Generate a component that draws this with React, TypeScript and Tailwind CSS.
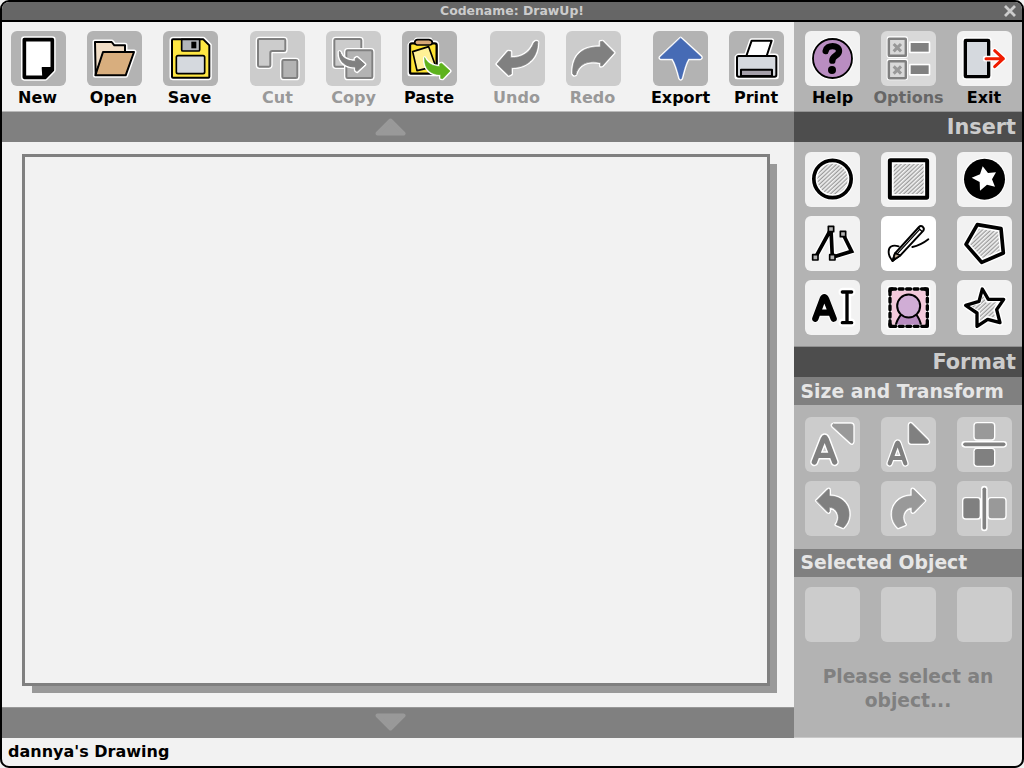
import React from "react";

type IconProps = { box: string; children?: React.ReactNode };

const G = "#808080";
const L = "#999999";

function Icon({ box, children }: IconProps) {
  return (
    <svg viewBox={box} className="block h-[55px] w-[55px]" fill="none" strokeLinejoin="round" strokeLinecap="round">
      {children}
    </svg>
  );
}

/* A shape with a white halo behind its outline. */
function Halo({ d, w = 6 }: { d: string; w?: number }) {
  return <path d={d} fill="#fff" stroke="#fff" strokeWidth={w + 9} />;
}

function Cut({ d, fill = G, w = 10 }: { d: string; fill?: string; w?: number }) {
  return (
    <>
      <path d={d} fill="#fff" stroke="#fff" strokeWidth={w} />
      <path d={d} fill={fill} stroke={fill} strokeWidth={Math.max(w - 8, 1)} />
    </>
  );
}

function Hatch() {
  return (
    <defs>
      <pattern id="hatch" width="8.8" height="8.8" patternUnits="userSpaceOnUse" patternTransform="rotate(-43)">
        <rect width="8.8" height="8.8" fill="#f4f4f4" />
        <rect y="2" width="8.8" height="3.8" fill="#999" />
      </pattern>
    </defs>
  );
}

const folderBack = "M284 126H334L342 136H374V156H312L286 222Z";
const folderFront = "M308 156H401L376 226H285Z";
const floppy = "M517 118H608L626 136V230Q626 233 623 233H517Q514 233 514 230V121Q514 118 517 118Z";
const cutA = "M58 57H132Q136 57 136 61V89Q136 93 132 93H97Q91 93 91 98V136Q91 140 87 140H58Q54 140 54 136V61Q54 57 58 57Z";
const cutB = "M131 120H168Q172 120 172 124V170Q172 174 168 174H131Q127 174 127 170V124Q127 120 131 120Z";
const copyA = "M287 57H360Q364 57 364 61V136Q364 140 360 140H287Q283 140 283 136V61Q283 57 287 57Z";
const copyB = "M323 91H393Q397 91 397 95V170Q397 174 393 174H323Q319 174 319 170V95Q319 91 323 91Z";
const copyArrow = "M300 96C306 114 320 123 346 124V116L351 113L374 133L351 154L347 151V141C316 141 296 125 298 96Z";
const pasteArrow = "M554 114C564 132 578 138 599 140V132L605 130L630 153L608 176L602 175V164C574 164 552 149 554 114Z";
const undo = "M173 66C174 105 151 143 94 143V162L86 166L51 132L84 94L92 95V113C124 115 151 98 162 68Q169 61 173 66Z";
const redo = "M287 164C296 132 323 120 362 128V138L367 137L402 98L368 64L361 65V81C308 79 277 105 278 161Q281 168 287 164Z";
const exportArrow = "M123 114L184 170Q187 174 182 176H146C137 191 132 211 126 235Q123 241 120 235C114 211 108 191 99 176H63Q59 174 62 171Z";

const NewIcon = () => (
  <Icon box="32 93 165 165">
    <Halo d="M72 119H156V210L134 232H72Z" w={11} />
    <path d="M72 119H156V210L134 232H72Z" fill="#fff" stroke="#000" strokeWidth="11" />
    <path d="M126 203H156L128 232Z" fill="#000" stroke="#000" strokeWidth="4" />
  </Icon>
);
const OpenIcon = () => (
  <Icon box="260 93 165 165">
    <Halo d={folderBack} /><Halo d={folderFront} />
    <path d={folderBack} fill="#f2dec6" stroke="#000" strokeWidth="6" />
    <path d={folderFront} fill="#d8ae7e" stroke="#000" strokeWidth="6" />
  </Icon>
);
const SaveIcon = () => (
  <Icon box="487 93 165 165">
    <Halo d={floppy} />
    <path d={floppy} fill="#ffe743" stroke="#000" strokeWidth="6" />
    <path d="M543 118H597V149Q597 153 593 153H547Q543 153 543 149Z" fill="#b2b5ba" stroke="#000" strokeWidth="5" />
    <rect x="572" y="125" width="15" height="20" fill="#000" />
    <rect x="527" y="167" width="85" height="54" rx="5" fill="#d5d9de" stroke="#000" strokeWidth="5" />
  </Icon>
);
const CutIcon = () => (
  <Icon box="30 33 165 165">
    <Halo d={cutA} w={5} /><Halo d={cutB} w={5} />
    <path d={cutA} fill="#ccc" stroke={G} strokeWidth="6" />
    <path d={cutB} fill="#b3b3b3" stroke={G} strokeWidth="6" />
  </Icon>
);
const CopyIcon = () => (
  <Icon box="258 33 165 165">
    <Halo d={copyA} w={5} />
    <path d={copyA} fill="#ccc" stroke={G} strokeWidth="6" />
    <Halo d={copyB} w={5} />
    <path d={copyB} fill="#b3b3b3" stroke={G} strokeWidth="6" />
    <Cut d={copyArrow} w={11} />
  </Icon>
);
const PasteIcon = () => (
  <Icon box="486 33 165 165">
    <Halo d="M515 69H584Q590 69 590 75V161H510V75Z" />
    <Halo d="M530 60H570L577 75H524Z" />
    <rect x="510" y="70" width="80" height="91" rx="6" fill="#fee332" stroke="#000" strokeWidth="7" />
    <path d="M518 95L566 80L587 139L531 152Z" fill="#fff196" stroke="#000" strokeWidth="5" />
    <path d="M533 59H567Q577 60 577 68Q576 75 569 75H531Q524 74 524 67Q525 60 533 59Z" fill="#d8a878" stroke="#000" strokeWidth="5" />
    <Cut d={pasteArrow} fill="#5db21c" />
  </Icon>
);
const UndoIcon = () => <Icon box="30 33 165 165"><Cut d={undo} /></Icon>;
const RedoIcon = () => <Icon box="258 33 165 165"><Cut d={redo} /></Icon>;
const ExportIcon = () => <Icon box="40 93 165 165"><Cut d={exportArrow} fill="#466bb5" w={9} /></Icon>;
const PrintIcon = () => (
  <Icon box="268 93 165 165">
    <Halo d="M336 122H396L381 168H320Z" />
    <Halo d="M296 168H406Q410 168 410 172V230H292V172Z" />
    <path d="M336 122H396L381 168H320Z" fill="#fff" stroke="#000" strokeWidth="6" />
    <rect x="292" y="168" width="118" height="62" rx="5" fill="#d5d9de" stroke="#000" strokeWidth="6" />
    <path d="M304 228V209H397V228Z" fill="#a5a0aa" stroke="#000" strokeWidth="6" />
  </Icon>
);
const HelpIcon = () => (
  <Icon box="45 93 165 165">
    <circle cx="127.500" cy="175.500" r="65" fill="#fff" />
    <circle cx="127.500" cy="175.500" r="58.500" fill="#b98dc1" stroke="#000" strokeWidth="5.500" />
    <path d="M107 153C110 133 147 134 147 153C147 168 127 166 127 182" stroke="#000" strokeWidth="19" />
    <circle cx="126" cy="210" r="12" fill="#000" />
  </Icon>
);
const OptionsIcon = () => (
  <Icon box="274 93 165 165">
    {[142, 209].map((y) => (
      <g key={y}>
        <rect x="291" y={y - 33} width="64" height="65" rx="7" fill="#fff" />
        <rect x="297.500" y={y - 25.500} width="51" height="51" rx="2" fill="#d9d9d9" stroke={G} strokeWidth="7.500" />
        <path d={`M312 ${y - 10}L334 ${y + 12}M334 ${y - 10}L312 ${y + 12}`} stroke={L} strokeWidth="9" strokeLinecap="butt" />
        <rect x="358" y={y - 18} width="64" height="36" rx="4" fill="#fff" />
        <rect x="363" y={y - 13} width="54" height="26" fill={G} />
      </g>
    ))}
  </Icon>
);
const ExitIcon = () => (
  <Icon box="502 93 165 165">
    <Halo d="M527 121H597V230H527Z" w={9} />
    <rect x="527" y="121" width="70" height="109" rx="2" fill="#d5d9de" stroke="#000" strokeWidth="10" />
    <path d="M588 176H641M614 152L641 176L614 200" stroke="#fff" strokeWidth="17" />
    <path d="M589 176H641M615 152L641 176L615 200" stroke="#f01c00" strokeWidth="9" />
  </Icon>
);
const CircleIcon = () => (
  <Icon box="30 21 165 165">
    <Hatch />
    <circle cx="112.500" cy="102" r="65" fill="#fff" />
    <circle cx="112.500" cy="102" r="56" fill="#fff" stroke="#000" strokeWidth="11" />
    <circle cx="112.500" cy="102" r="45.500" fill="url(#hatch)" />
  </Icon>
);
const SquareIcon = () => (
  <Icon box="258 21 165 165">
    <rect x="276" y="37" width="129" height="130" rx="9" fill="#fff" />
    <rect x="284.500" y="46" width="112" height="112" rx="2" fill="#fff" stroke="#000" strokeWidth="12" />
    <rect x="296" y="57" width="90" height="90" fill="url(#hatch)" />
  </Icon>
);
const BadgeIcon = () => (
  <Icon box="486 21 165 165">
    <circle cx="568.500" cy="102.500" r="65" fill="#fff" />
    <circle cx="568.500" cy="102.500" r="61.500" fill="#000" />
    <path d="M563 64L579 84L603 82L591 103L600 125L576 119L555 137L554 111L530 98L555 88Z" fill="#fff" />
  </Icon>
);
const PathIcon = () => (
  <Icon box="30 17 165 165">
    <path d="M61 142L108 56L112 141L170 123L144 71" stroke="#fff" strokeWidth="19" />
    <path d="M61 142L108 56L112 141L170 123L144 71" stroke="#000" strokeWidth="11" strokeLinejoin="miter" strokeMiterlimit="3" />
    {[[61, 141], [108, 56], [144, 71], [112, 141]].map(([x, y]) => (
      <rect key={x} x={x - 8} y={y - 8} width="16" height="16" fill="#b3b3b3" stroke="#000" strokeWidth="5" />
    ))}
  </Icon>
);
const PencilIcon = () => (
  <Icon box="258 17 165 165">
    <path d="M311 108C291 102 280 110 281 126C281 139 287 143 292 151M352 110C372 106 386 98 400 87" stroke="#000" strokeWidth="5.500" />
    <path d="M293 151L300 129L372 50Q377 45 383 49Q389 54 385 61L316 135Z" fill="#fff" stroke="#000" strokeWidth="6" />
    <path d="M300 129L316 135L293 151Z" fill="#b7a48f" stroke="#000" strokeWidth="5" />
    <path d="M293 151L299 144" stroke="#000" strokeWidth="7" />
    <path d="M308 129L374 57M370 53L382 64" stroke="#000" strokeWidth="4" />
  </Icon>
);
const pentagon = "M547 43L618 55L625 128L560 156L513 102Z";
const PentagonIcon = () => (
  <Icon box="486 17 165 165">
    <Halo d={pentagon} w={10} />
    <path d={pentagon} stroke="#000" strokeWidth="11" fill="#fff" />
    <path d="M552 55L609 64L614 121L563 143L525 101Z" fill="url(#hatch)" />
  </Icon>
);
const TextIcon = () => (
  <Icon box="30 209 165 165">
    <path d="M61 325L88 260L115 325M70 307H106M143 245H169M143 337H169M156 245V337" stroke="#fff" strokeWidth="25" />
    <path d="M61 325L83 266Q88 255 93 266L116 325M72 307H106" stroke="#000" strokeWidth="19" />
    <path d="M142 245H170M142 337H170M156 245V337" stroke="#000" strokeWidth="10" />
  </Icon>
);
const ImageIcon = () => (
  <Icon box="258 209 165 165">
    <rect x="275" y="226" width="131" height="131" rx="9" fill="#fff" />
    <rect x="285" y="236" width="112" height="112" fill="#f4cadb" />
    <path d="M302 347C304 330 312 320 321 309H361C370 320 377 330 378 347Z" fill="#b98dc1" stroke="#000" strokeWidth="6" />
    <circle cx="341" cy="287" r="34.500" fill="#d0add5" stroke="#000" strokeWidth="6" />
    <path d="M285 236H397V348H285Z" stroke="#fff" strokeWidth="9" strokeLinecap="butt" />
    <path d="M290 236H397V348H285V236Z" stroke="#000" strokeWidth="10" strokeDasharray="12 10.400" />
    <path d="M285 243V236H292M390 236H397V243M397 341V348H390M292 348H285V341" stroke="#000" strokeWidth="10" />
  </Icon>
);
const star = "M562 236L580 267L626 267L605 298L615 337L578 327L546 348L546 308L512 285L552 273Z";
const StarIcon = () => (
  <Icon box="486 209 165 165">
    <Halo d={star} w={10} />
    <path d={star} fill="#fff" stroke="#000" strokeWidth="10" />
    <path d="M563 254L574 277L606 276L594 299L601 323L577 316L555 331L555 303L529 288L558 280Z" fill="url(#hatch)" />
  </Icon>
);
const letterA = "M74 366L101 297Q105 288 109 297L135 366M84 346H126";
const letterB = "M300 370L321 312Q324 304 327 312L347 370M308 354H340";
const GrowIcon = () => (
  <Icon box="46 231 165 165">
    <path d={letterA} stroke="#fff" strokeWidth="25" /><path d={letterA} stroke={G} strokeWidth="16" />
    <Cut d="M132 252H184Q190 252 190 258V305Q189 313 183 308L129 259Q125 254 132 252Z" fill={L} />
  </Icon>
);
const ShrinkIcon = () => (
  <Icon box="274 231 165 165">
    <path d={letterB} stroke="#fff" strokeWidth="20" /><path d={letterB} stroke={G} strokeWidth="12.500" />
    <Cut d="M359 256Q359 249 365 251L414 300Q420 308 413 310H364Q359 310 359 304Z" />
  </Icon>
);
const FlipVIcon = () => (
  <Icon box="502 231 165 165">
    <rect x="551" y="246" width="66" height="56" rx="11" fill="#fff" />
    <rect x="551" y="323" width="66" height="58" rx="11" fill="#fff" />
    <rect x="555" y="250" width="58" height="48" rx="7" fill={L} />
    <rect x="555" y="327" width="58" height="50" rx="7" fill={G} />
    <path d="M525 313H642" stroke="#fff" strokeWidth="20" /><path d="M526 313H642" stroke={G} strokeWidth="11" />
  </Icon>
);
const rotate = "M81 76L114 43Q119 39 119 44V62C158 62 181 90 178 122C177 137 170 148 161 157L139 148C149 134 148 118 140 107C135 100 128 97 119 96V109Q118 113 114 110Z";
const RotLIcon = () => (
  <Icon box="46 17 165 165"><Cut d={rotate} /></Icon>
);
const RotRIcon = () => (
  <Icon box="274 17 165 165">
    <g transform="translate(486 0) scale(-1 1)"><Cut d={rotate} fill={L} /></g>
  </Icon>
);
const FlipHIcon = () => (
  <Icon box="502 17 165 165">
    <rect x="517" y="65" width="58" height="68" rx="11" fill="#fff" />
    <rect x="593" y="65" width="58" height="68" rx="11" fill="#fff" />
    <rect x="521" y="69" width="49" height="60" rx="7" fill={G} />
    <rect x="597" y="69" width="50" height="60" rx="7" fill={L} />
    <path d="M584 41V158" stroke="#fff" strokeWidth="20" /><path d="M584 42V157" stroke={G} strokeWidth="11" />
  </Icon>
);

function Tile({ tone = "bg-[#f2f2f2]", children }: { tone?: string; children?: React.ReactNode }) {
  return <div className={`h-[55px] w-[55px] shrink-0 rounded-[6px] ${tone}`}>{children}</div>;
}

function Tool({ label, tone, text = "text-black", children }: { label: string; tone: string; text?: string; children: React.ReactNode }) {
  return (
    <button className="flex w-[55px] shrink-0 flex-col items-center">
      <Tile tone={tone}>{children}</Tile>
      <span className={`mt-[2px] whitespace-nowrap text-[16px] leading-5 ${text}`}>{label}</span>
    </button>
  );
}

const on = "bg-[#b3b3b3]";
const off = "bg-[#cccccc]";
const dim = "text-[#999999]";
const nudge = "-ml-[2px] text-black";
const dimNudge = "-ml-[2px] text-[#999999]";

function TileGrid({ children }: { children: React.ReactNode }) {
  return <div className="grid grid-cols-[55px_55px_55px] gap-x-[21px] gap-y-[9px] pl-[11px]">{children}</div>;
}

export default function App() {
  return (
    <div className="h-[768px] w-[1024px] bg-[#f2f2f2] font-['DejaVu_Sans',sans-serif] font-bold">
      <div className="flex h-full w-full flex-col overflow-hidden rounded-[9px] border-2 border-black bg-[#f2f2f2]">
        <header className="flex h-5 shrink-0 items-center border-b-2 border-black bg-[#666666]">
          <h1 className="flex-1 pl-[18px] text-center text-[12.45px] leading-[18px] text-[#cccccc]">Codename: DrawUp!</h1>
          <button aria-label="Close" className="mr-[6px] flex h-[18px] w-3 items-center">
            <svg viewBox="0 0 12 12" className="h-3 w-3" fill="none" stroke="#ccc" strokeWidth="2.8">
              <path d="M1 1L11 11M11 1L1 11" />
            </svg>
          </button>
        </header>

        <div className="flex h-[716px] shrink-0">
          <main className="flex w-[792px] flex-col">
            <nav className="flex h-[89px] shrink-0 pl-[9px] pt-[9px]">
              <div className="flex gap-[21px]">
                <Tool label="New" tone={on} text={nudge}><NewIcon /></Tool>
                <Tool label="Open" tone={on} text={nudge}><OpenIcon /></Tool>
                <Tool label="Save" tone={on} text={nudge}><SaveIcon /></Tool>
              </div>
              <div className="ml-8 flex gap-[21px]">
                <Tool label="Cut" tone={off} text={dim}><CutIcon /></Tool>
                <Tool label="Copy" tone={off} text={dim}><CopyIcon /></Tool>
                <Tool label="Paste" tone={on} text="-ml-px text-black"><PasteIcon /></Tool>
              </div>
              <div className="ml-[33px] flex gap-[21px]">
                <Tool label="Undo" tone={off} text={dimNudge}><UndoIcon /></Tool>
                <Tool label="Redo" tone={off} text={dimNudge}><RedoIcon /></Tool>
              </div>
              <div className="ml-[32px] flex gap-[21px]">
                <Tool label="Export" tone={on}><ExportIcon /></Tool>
                <Tool label="Print" tone={on} text="-ml-px text-black"><PrintIcon /></Tool>
              </div>
            </nav>
            <button aria-label="Scroll up" className="flex h-[31px] shrink-0 border-t border-[#b9b9b9] bg-[#808080] pl-[373px] pt-[6px]">
              <svg viewBox="0 0 31 18" className="h-[18px] w-[31px]"><path d="M15.500 2.500L28.500 15.500H2.500Z" fill="#999" stroke="#999" strokeWidth="4" strokeLinejoin="round" /></svg>
            </button>
            <section className="flex flex-1 pl-5 pt-[12px]">
              <div className="h-[532px] w-[748px] border-[3px] border-[#808080] bg-[#f2f2f2] shadow-[8.5px_8.5px_0_-1.5px_#999999]" />
            </section>
            <button aria-label="Scroll down" className="flex h-[31px] shrink-0 border-t border-[#999999] bg-[#808080] pl-[373px] pt-[5px]">
              <svg viewBox="0 0 31 18" className="h-[18px] w-[31px]"><path d="M15.500 15.500L28.500 2.500H2.500Z" fill="#999" stroke="#999" strokeWidth="4" strokeLinejoin="round" /></svg>
            </button>
          </main>

          <aside className="flex w-[228px] flex-col border-b border-[#c8c8c8] bg-[#b3b3b3]">
            <div className="flex h-[89px] shrink-0 gap-[21px] pl-[11px] pt-[9px]">
              <Tool label="Help" tone="bg-[#f2f2f2]"><HelpIcon /></Tool>
              <Tool label="Options" tone="bg-[#d9d9d9]" text="text-[#666666]"><OptionsIcon /></Tool>
              <Tool label="Exit" tone="bg-[#f2f2f2]" text="-ml-px text-black"><ExitIcon /></Tool>
            </div>
            <h2 className="h-[31px] shrink-0 border-t border-[#929292] bg-[#4d4d4d] pr-[6px] text-right text-[20.8px] leading-[31px] text-[#cccccc]">Insert</h2>
            <div className="h-[204px] shrink-0 pt-[10px]">
              <TileGrid>
                <Tile><CircleIcon /></Tile>
                <Tile><SquareIcon /></Tile>
                <Tile><BadgeIcon /></Tile>
                <Tile><PathIcon /></Tile>
                <Tile tone="bg-white"><PencilIcon /></Tile>
                <Tile><PentagonIcon /></Tile>
                <Tile><TextIcon /></Tile>
                <Tile><ImageIcon /></Tile>
                <Tile><StarIcon /></Tile>
              </TileGrid>
            </div>
            <h2 className="h-[31px] shrink-0 border-t border-[#909090] bg-[#4d4d4d] pr-[6px] text-right text-[20.8px] leading-[31px] text-[#cccccc]">Format</h2>
            <h3 className="h-7 shrink-0 bg-[#808080] pl-[6.5px] text-[18.8px] leading-[30px] text-[#e6e6e6]">Size and Transform</h3>
            <div className="h-[144px] shrink-0 pt-[12px]">
              <TileGrid>
                <Tile tone={off}><GrowIcon /></Tile>
                <Tile tone={off}><ShrinkIcon /></Tile>
                <Tile tone={off}><FlipVIcon /></Tile>
                <Tile tone={off}><RotLIcon /></Tile>
                <Tile tone={off}><RotRIcon /></Tile>
                <Tile tone={off}><FlipHIcon /></Tile>
              </TileGrid>
            </div>
            <h3 className="h-7 shrink-0 bg-[#808080] pl-[6.5px] text-[18.75px] leading-[28px] text-[#e6e6e6]">Selected Object</h3>
            <div className="pt-[10px]">
              <TileGrid><Tile tone={off} /><Tile tone={off} /><Tile tone={off} /></TileGrid>
            </div>
            <p className="mt-[23px] text-center text-[18.67px] leading-[23.5px] text-[#808080]">Please select an<br />object...</p>
          </aside>
        </div>
        <footer className="h-7 shrink-0 pl-[6px] text-[16px] leading-[27px] text-black">dannya's Drawing</footer>
      </div>
    </div>
  );
}
